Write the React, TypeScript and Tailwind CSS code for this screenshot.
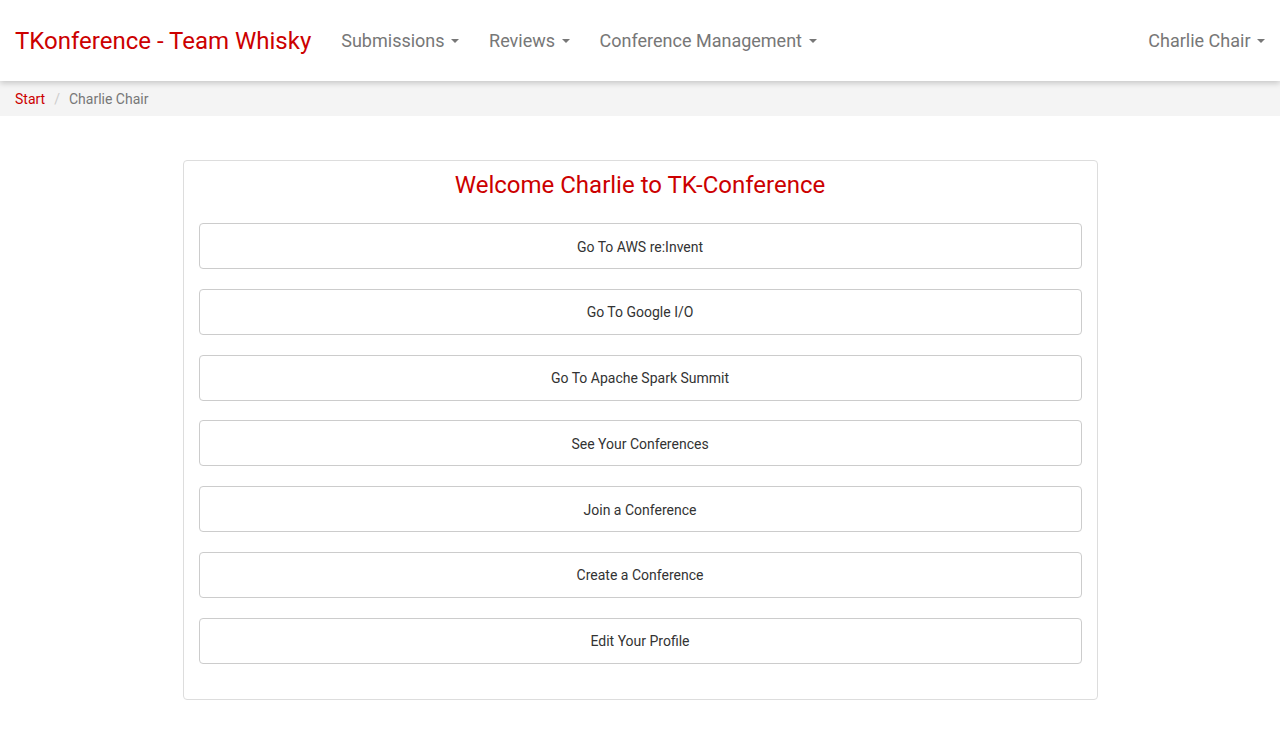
import React from "react";

const Caret = () => (
  <span className="ml-[6.5px] inline-block h-0 w-0 border-x-[4px] border-t-[4px] border-x-transparent border-t-[#777] align-middle" />
);

const navItems = ["Submissions", "Reviews", "Conference Management"];

const actions = [
  "Go To AWS re:Invent",
  "Go To Google I/O",
  "Go To Apache Spark Summit",
  "See Your Conferences",
  "Join a Conference",
  "Create a Conference",
  "Edit Your Profile",
];

const App = () => {
  return (
    <div className="min-h-[750px] bg-white font-['Roboto',sans-serif]">
      {/* Navbar */}
      <nav className="relative z-10 flex h-[81px] items-center bg-white px-[15px] shadow-[0_2px_6px_rgba(0,0,0,0.2)]">
        <a className="mr-[15px] text-[24px] text-[#cc0000]">TKonference - Team Whisky</a>
        <ul className="flex items-center">
          {navItems.map((item) => (
            <li key={item} className="flex items-center px-[15px] text-[18px] text-[#777]">
              {item}
              <Caret />
            </li>
          ))}
        </ul>
        <div className="ml-auto flex items-center text-[18px] text-[#777]">
          Charlie Chair
          <Caret />
        </div>
      </nav>

      {/* Breadcrumb */}
      <div className="flex h-[35px] items-center bg-[#f4f4f4] px-[15px] pt-[2px] text-[14px]">
        <span className="text-[#cc0000]">Start</span>
        <span className="px-[9px] text-[#ccc]">/</span>
        <span className="text-[#777]">Charlie Chair</span>
      </div>

      {/* Main card */}
      <div className="flex justify-center pt-[44px]">
        <div className="w-[915px] rounded border border-[#ddd] px-[15px] pb-[35px] pt-[9px]">
          <h1 className="mb-[23px] text-center text-[24px] leading-[30px] text-[#cc0000]">
            Welcome Charlie to TK-Conference
          </h1>
          <div className="flex flex-col gap-[19.8px]">
            {actions.map((a) => (
              <button
                key={a}
                className="h-[46px] w-full rounded border border-[#ccc] bg-white pt-[2px] text-[14px] text-[#333]"
              >
                {a}
              </button>
            ))}
          </div>
        </div>
      </div>
    </div>
  );
};

export default App;
